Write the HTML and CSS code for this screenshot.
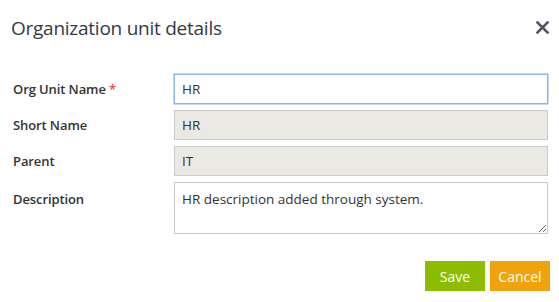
FILE: index.html
```html
<!DOCTYPE html>
<html lang="en">
<head>
<meta charset="utf-8">
<title>Organization unit details</title>
<link rel="stylesheet" href="styles.css">
</head>
<body>
<div class="dialog">
  <div class="header">
    <h1 class="title">Organization unit details</h1>
    <button class="close" type="button" aria-label="Close">
      <svg width="15" height="15" viewBox="0 0 15 15"><path d="M1.6 1.6 L13.4 13.4 M13.4 1.6 L1.6 13.4" stroke="#4d5563" stroke-width="2.7" stroke-linecap="butt"/></svg>
    </button>
  </div>
  <form class="form">
    <label class="label">Org Unit Name <span class="req">*</span></label>
    <input class="field focus" type="text" value="HR">
    <label class="label">Short Name</label>
    <input class="field readonly" type="text" value="HR" readonly>
    <label class="label">Parent</label>
    <input class="field readonly" type="text" value="IT" readonly>
    <label class="label top">Description</label>
    <textarea class="field area">HR description added through system.</textarea>
  </form>
  <div class="actions">
    <button class="btn save" type="button">Save</button>
    <button class="btn cancel" type="button">Cancel</button>
  </div>
</div>
</body>
</html>
```

FILE: styles.css
```css
html, body {
  margin: 0;
  padding: 0;
  background: #fff;
}
body {
  font-family: "Open Sans", "Noto Sans", sans-serif;
  color: #333;
}
.dialog {
  width: 559px;
}
.header {
  display: flex;
  justify-content: space-between;
  align-items: flex-start;
  padding: 14px 9px 0 11px;
}
.title {
  margin: 0;
  font-size: 19px;
  line-height: 28px;
  font-weight: 400;
  color: #333a44;
  letter-spacing: -0.25px;
}
.close {
  border: 0;
  background: none;
  padding: 0;
  margin-top: 6px;
  width: 15px;
  height: 15px;
  display: block;
  cursor: pointer;
}
.close svg { display: block; }
.form {
  display: grid;
  grid-template-columns: 161px 1fr;
  grid-auto-rows: auto;
  row-gap: 6px;
  margin-top: 32px;
  padding: 0 11px 0 13px;
}
.label {
  font-size: 13px;
  font-weight: 600;
  line-height: 31px;
  height: 30px;
  color: #333;
  letter-spacing: -0.1px;
}
.label.top {
  line-height: 20px;
  height: auto;
  padding-top: 7px;
}
.req {
  color: #e74c3c;
}
.field {
  box-sizing: border-box;
  width: 100%;
  height: 30px;
  margin: 0;
  padding: 0 7px;
  border: 1px solid #c9c9c9;
  border-radius: 0;
  font-family: "Open Sans", "Noto Sans", sans-serif;
  font-size: 13.5px;
  color: #333;
  background: #fff;
  outline: none;
}
.field.focus {
  border-color: #8db2ee;
  box-shadow: 0 0 0 0.5px #8db2ee;
}
.field.readonly {
  background: #eae9e3;
}
.field.area {
  height: 52px;
  padding: 6px 7px;
  line-height: 20px;
  resize: vertical;
  display: block;
}
.actions {
  display: flex;
  justify-content: flex-end;
  gap: 5px;
  margin-top: 27px;
  padding-right: 9px;
}
.btn {
  width: 60px;
  height: 30px;
  border: 0;
  border-radius: 0;
  padding: 0;
  color: #fff;
  font-family: "Open Sans", "Noto Sans", sans-serif;
  font-size: 14px;
  cursor: pointer;
}
.save { background: #8cbd00; }
.cancel { background: #f0a30a; }
```
